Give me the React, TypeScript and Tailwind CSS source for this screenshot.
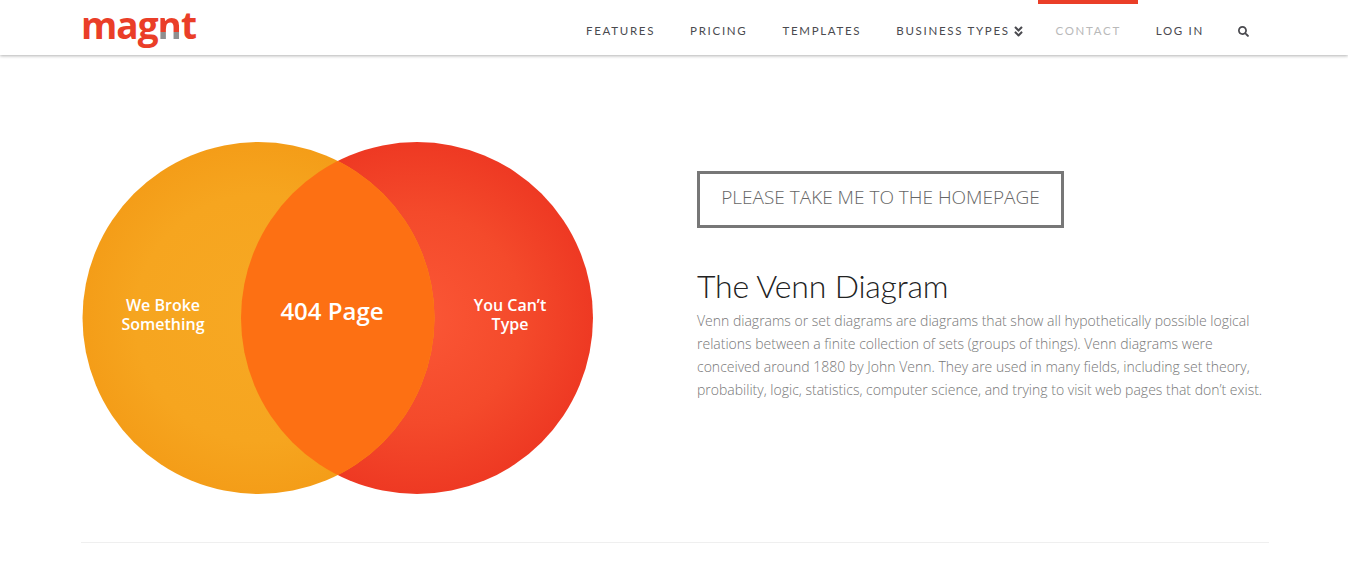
import { FaAngleDoubleDown, FaSearch } from "react-icons/fa";

const navItems = ["FEATURES", "PRICING", "TEMPLATES"];

function NavLink({ label, className = "" }: { label: string; className?: string }) {
  return (
    <a className={`text-[11.5px] font-normal tracking-[1.7px] text-[#4a4a4f] ${className}`}>{label}</a>
  );
}

function VennDiagram() {
  return (
    <svg width="512" height="354" viewBox="0 0 512 354" className="block shrink-0">
      <defs>
        <radialGradient id="leftFill">
          <stop offset="0%" stopColor="#f7a823" />
          <stop offset="70%" stopColor="#f6a51f" />
          <stop offset="100%" stopColor="#f49d18" />
        </radialGradient>
        <radialGradient id="rightFill">
          <stop offset="0%" stopColor="#fb5736" />
          <stop offset="60%" stopColor="#f44a2b" />
          <stop offset="100%" stopColor="#ee3923" />
        </radialGradient>
        <clipPath id="leftClip">
          <circle cx="176.5" cy="177" r="176" />
        </clipPath>
      </defs>
      <circle cx="335" cy="177" r="176" fill="url(#rightFill)" />
      <circle cx="176.5" cy="177" r="176" fill="url(#leftFill)" />
      <circle cx="335" cy="177" r="176" fill="#fd7013" clipPath="url(#leftClip)" />
      <g fill="#fff" textAnchor="middle" fontFamily="'Open Sans', sans-serif" fontWeight="600">
        <text fontSize="16">
          <tspan x="81" y="170">We Broke</tspan>
          <tspan x="81" y="189">Something</tspan>
        </text>
        <text x="250" y="179" fontSize="24">404 Page</text>
        <text fontSize="16">
          <tspan x="428" y="170">You Can’t</tspan>
          <tspan x="428" y="189">Type</tspan>
        </text>
      </g>
    </svg>
  );
}

export default function App() {
  return (
    <div className="min-h-[568px] overflow-hidden bg-white font-['Lato',sans-serif]">
      <header className="h-[55px] bg-white shadow-[0_1px_3px_rgba(0,0,0,0.3)]">
        <div className="flex h-full items-start justify-between pl-[81px] pr-[99px]">
          <div className="font-['Open_Sans',sans-serif] text-[37px] font-bold leading-[50px] tracking-[-1px] text-[#ea3e28]">
            mag
            <span className="bg-[linear-gradient(to_bottom,#ea3e28_0,#ea3e28_33px,#8f8f8f_33px,#8f8f8f_50px)] bg-clip-text text-transparent">
              n
            </span>
            t
          </div>
          <nav className="flex h-full items-center">
            <div className="flex items-center gap-[35px] pt-[7px]">
              {navItems.map((item) => (
                <NavLink key={item} label={item} />
              ))}
              <div className="flex items-center gap-[2px]">
                <NavLink label="BUSINESS TYPES" />
                <FaAngleDoubleDown size={13} className="-mr-[3px] text-[#4a4a4f]" />
              </div>
            </div>
            <div className="ml-[16px] flex h-full w-[100px] items-center justify-center border-t-4 border-[#ea3e28] pl-[1px] pt-[3px]">
              <NavLink label="CONTACT" className="!text-[#b9b9b9] font-bold" />
            </div>
            <div className="ml-[18px] flex items-center pt-[7px]">
              <NavLink label="LOG IN" />
              <FaSearch size={11} className="ml-[34px] text-[#4a4a4f]" />
            </div>
          </nav>
        </div>
      </header>

      <main className="ml-[81px] mr-[79px] flex h-[488px] items-start border-b border-[#efefef]">
        <div className="ml-[1px] mt-[86px]">
          <VennDiagram />
        </div>
        <section className="ml-[103px] mt-[116px] min-w-0">
          <a className="inline-block h-[57px] w-[367px] border-[3px] border-[#777] text-center font-['Open_Sans',sans-serif] text-[19px] font-light leading-[46px] text-[#666]">
            PLEASE TAKE ME TO THE HOMEPAGE
          </a>
          <h1 className="mt-[35px] text-[32px] font-light leading-[46px] tracking-[-0.2px] text-[#222]">The Venn Diagram</h1>
          <p className="mt-[0px] whitespace-nowrap font-['Open_Sans',sans-serif] text-[14px] font-light leading-[23px] text-[#777]">
            Venn diagrams or set diagrams are diagrams that show all hypothetically possible logical
            <br />
            relations between a finite collection of sets (groups of things). Venn diagrams were
            <br />
            conceived around 1880 by John Venn. They are used in many fields, including set theory,
            <br />
            probability, logic, statistics, computer science, and trying to visit web pages that don’t exist.
          </p>
        </section>
      </main>
    </div>
  );
}
